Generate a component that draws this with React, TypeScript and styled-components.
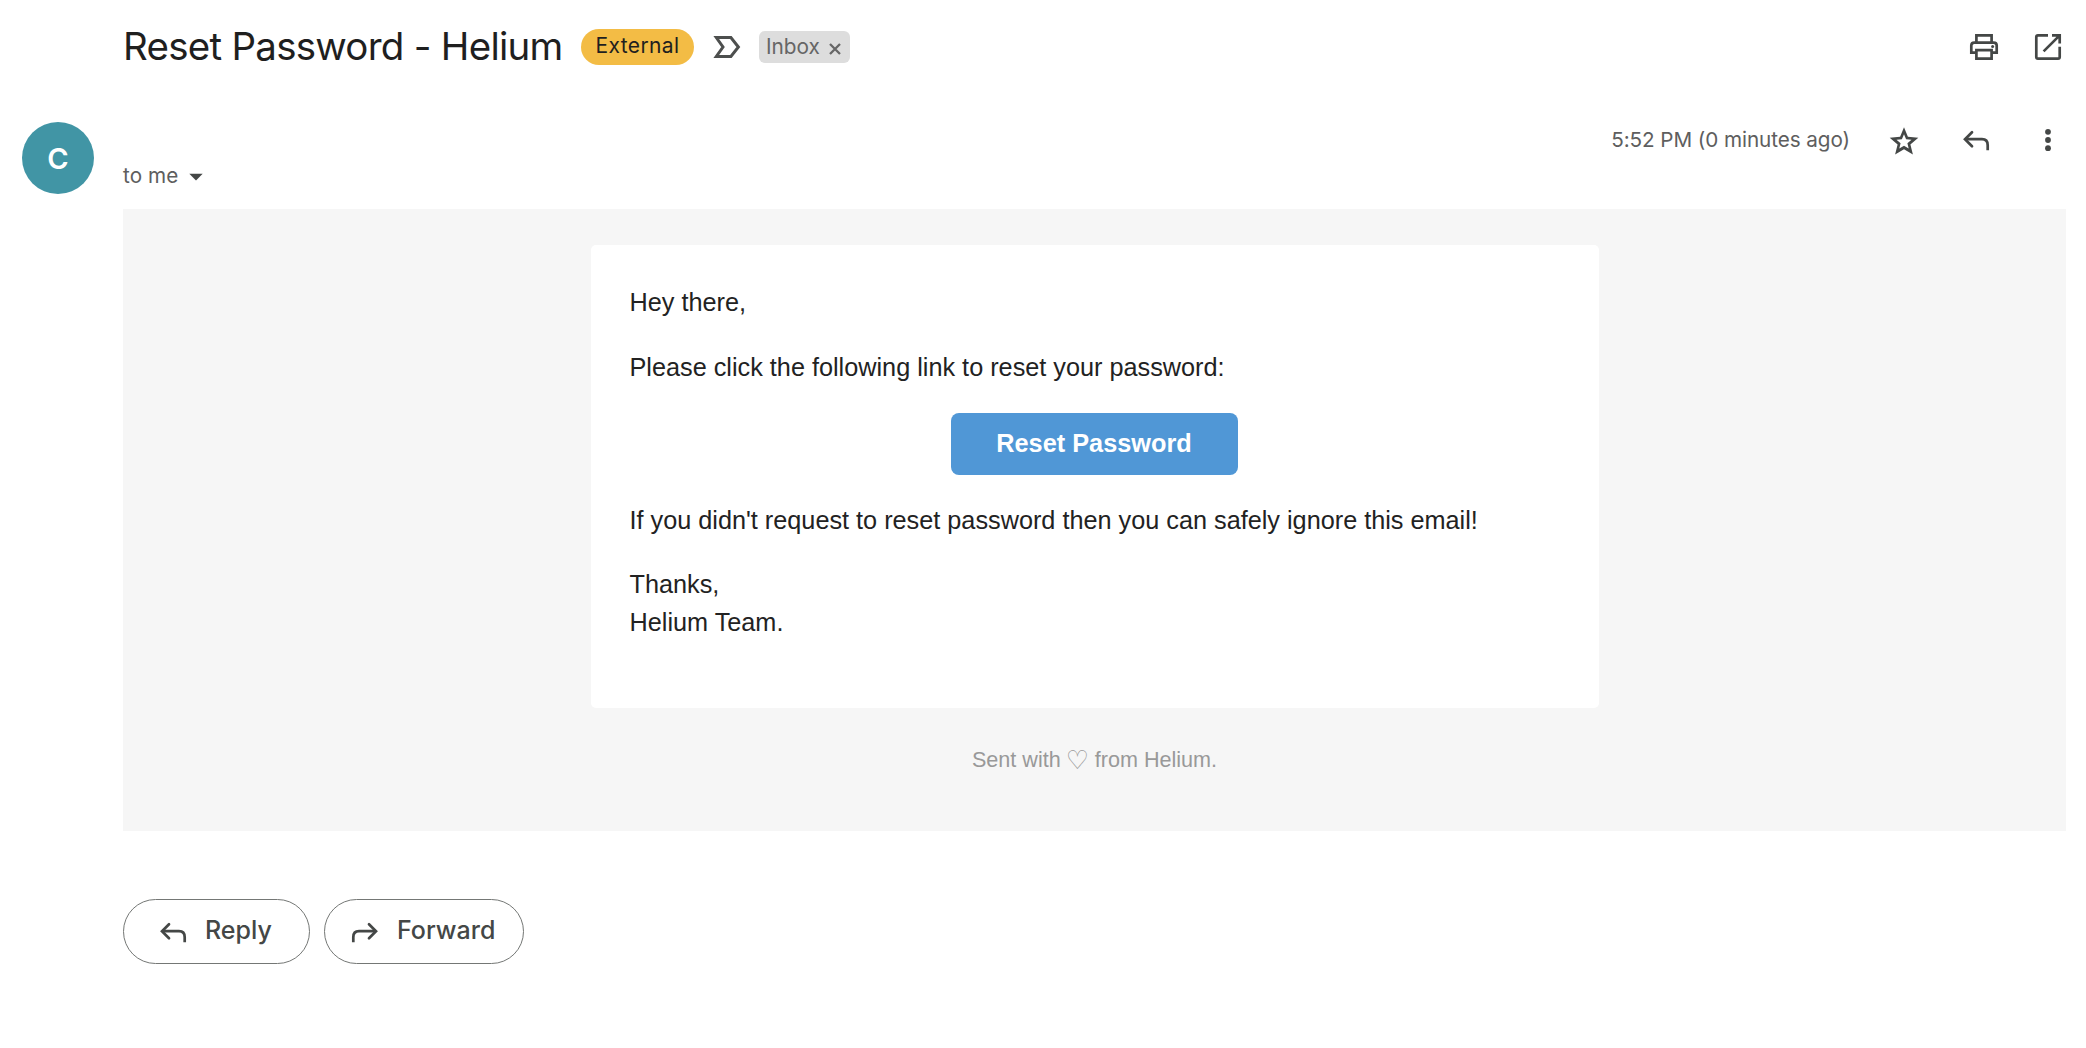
import React from "react";
import styled, { createGlobalStyle } from "styled-components";

const GlobalStyle = createGlobalStyle`
  * { box-sizing: border-box; }
  body { margin: 0; background: #fff; }
`;

const ui = `"Inter", "Roboto", sans-serif`;
const mail = `"Liberation Sans", Arial, sans-serif`;

const Page = styled.main`
  padding: 20px 20px 0 0;
  font-family: ${ui};
  color: #1f1f1f;
`;

const Header = styled.header`
  display: flex;
  align-items: center;
  height: 54px;
  padding-left: 123px;
`;

const Title = styled.h1`
  width: 440px;
  margin: 0 18px 0 0;
  font-size: 38.5px;
  font-weight: 400;
  line-height: 52px;
  letter-spacing: -0.74px;
  padding-bottom: 2px;
  white-space: nowrap;
`;

const ExternalTag = styled.span`
  width: 113px;
  height: 36px;
  border-radius: 18px;
  background: #f3bc45;
  font-size: 21px;
  line-height: 33px;
  letter-spacing: 0.36px;
  text-align: center;
`;

const ImportantMarker = styled.svg`
  width: 28px;
  height: 24px;
  margin: 0 18px 0 19px;
`;

const LabelChip = styled.span`
  display: flex;
  align-items: center;
  justify-content: space-between;
  width: 91px;
  height: 32px;
  padding: 0 9px 0 7px;
  border-radius: 6px;
  background: #ddd;
  color: #666;
  font-size: 20.8px;
  line-height: 30px;
`;

const CloseGlyph = styled.svg`
  width: 12px;
  height: 12px;
  margin-top: 3px;
`;

const Actions = styled.div<{ $gap: number }>`
  display: flex;
  align-items: center;
  gap: ${(p) => p.$gap}px;
  margin-left: auto;
`;

const Icon = styled.svg<{ $flip?: boolean }>`
  flex: none;
  width: 36px;
  height: 36px;
  fill: none;
  stroke: #444746;
  stroke-width: 2.7;
  transform: ${(p) => (p.$flip ? "scaleX(-1)" : "none")};
`;

const Message = styled.article`
  display: grid;
  grid-template-columns: 101px 1fr;
  margin-top: 48px;
  padding-left: 22px;
`;

const Avatar = styled.div`
  width: 72px;
  height: 72px;
  border-radius: 50%;
  background: #4195a5;
  color: #fff;
  font-size: 29px;
  font-weight: 600;
  line-height: 73px;
  text-align: center;
`;

const MetaRow = styled.div`
  display: flex;
  align-items: center;
  height: 36px;
  color: #5e5e5e;
  font-size: 20.7px;
`;

const Recipient = styled.span`
  padding-bottom: 2px;
  letter-spacing: 0.1px;
`;

const Timestamp = styled.span`
  line-height: 34px;
  padding-bottom: 1px;
  letter-spacing: -0.08px;
`;

const Caret = styled.svg`
  width: 14px;
  height: 8px;
  margin: 1px 0 0 11px;
`;

const Body = styled.section`
  display: flex;
  flex-direction: column;
  align-items: center;
  height: 622px;
  margin-top: 15px;
  padding-top: 36px;
  background: #f6f6f6;
  font-family: ${mail};
`;

const Card = styled.div`
  width: 1008px;
  height: 463px;
  padding: 39px 38px 0 39px;
  border-radius: 5px;
  background: #fff;
  color: #222;
  font-size: 25.25px;
  line-height: 37.3px;
`;

const Paragraph = styled.p`
  margin: 0 0 27.5px;
`;

const ResetButton = styled.button`
  display: block;
  width: 287px;
  height: 62px;
  margin: -1px 0 27px 321px;
  padding: 0;
  border: 0;
  border-radius: 8px;
  background: #5097d6;
  color: #fff;
  font: 700 25.3px ${mail};
`;

const Footer = styled.p`
  display: flex;
  align-items: center;
  gap: 7px;
  margin: 37px 0 0;
  color: #999;
  font-size: 21.6px;
  line-height: 30px;
`;

const Heart = styled.span`
  width: 20px;
  font-family: "DejaVu Sans", sans-serif;
  font-size: 26px;
  line-height: 24px;
  text-indent: -2px;
`;

const Replies = styled.footer`
  display: flex;
  gap: 14px;
  margin-top: 68px;
`;

const ReplyButton = styled.button<{ $width: number; $inset: number }>`
  display: flex;
  align-items: center;
  gap: 14px;
  width: ${(p) => p.$width}px;
  height: 65px;
  padding: 0 0 0 ${(p) => p.$inset}px;
  border: 1px solid #747775;
  border-radius: 33px;
  background: #fff;
  color: #444746;
  font: 450 25px ${ui};
`;

const ButtonText = styled.span`
  padding-bottom: 3px;
`;

const ReplyArrow = ({ flip }: { flip?: boolean }) => (
  <Icon $flip={flip} viewBox="0 0 36 36">
    <path d="M14 10.2 7 17.2l7 7" strokeLinecap="round" />
    <path d="M7.5 17.2H24q5.7 0 5.7 6v5" />
  </Icon>
);

export default function App() {
  return (
    <>
      <GlobalStyle />
      <Page>
        <Header>
          <Title>Reset Password - Helium</Title>
          <ExternalTag>External</ExternalTag>
          <ImportantMarker viewBox="0 0 28 24">
            <path d="M3.3 2.5h14.6L25.4 12l-7.5 9.5H3.3L10 12z" fill="none" stroke="#4d4f4e" strokeWidth="3" />
          </ImportantMarker>
          <LabelChip>
            Inbox
            <CloseGlyph viewBox="0 0 12 12">
              <path d="M1 1l10 10M11 1 1 11" stroke="#666" strokeWidth="2.3" />
            </CloseGlyph>
          </LabelChip>
          <Actions $gap={28}>
            <Icon viewBox="0 0 36 36">
              <path d="M10.4 14V6.4h15.2V14M10.4 23.6H5.3v-7q0-3 3-3h19.4q3 0 3 3v7h-5.1M10.4 21.2h15.2v8.5H10.4z" />
              <circle cx="26.6" cy="17.6" r="1.5" fill="#444746" stroke="none" />
            </Icon>
            <Icon viewBox="0 0 36 36">
              <path d="M18 6.3H8q-1.7 0-1.7 1.7v20q0 1.7 1.7 1.7h20q1.7 0 1.7-1.7V17.8M22 6.3h7.7v8.2M29.4 6.6 13.6 22.4" />
            </Icon>
          </Actions>
        </Header>
        <Message>
          <Avatar>C</Avatar>
          <div>
            <MetaRow>
              <Actions $gap={36}>
                <Timestamp>5:52 PM (0 minutes ago)</Timestamp>
                <Icon viewBox="0 0 36 36">
                  <path
                    fill="#444746"
                    stroke="none"
                    fillRule="evenodd"
                    d="M18 5.2l3.9 9.6 10.4.9-7.9 6.7 2.5 10.1-8.9-5.3-8.9 5.3 2.5-10.1-7.9-6.7 10.4-.9zM18 12.3l-2.1 5-5.4.5 4.1 3.5-1.3 5.3 4.7-2.9 4.7 2.9-1.3-5.3 4.1-3.5-5.4-.5z"
                  />
                </Icon>
                <ReplyArrow />
                <Icon viewBox="0 0 36 36">
                  <g fill="#444746" stroke="none">
                    <circle cx="18" cy="9.8" r="2.9" />
                    <circle cx="18" cy="18" r="2.9" />
                    <circle cx="18" cy="26.2" r="2.9" />
                  </g>
                </Icon>
              </Actions>
            </MetaRow>
            <MetaRow>
              <Recipient>to me</Recipient>
              <Caret viewBox="0 0 14 8">
                <path d="M.3.7h13.4L7 7.6z" fill="#444746" />
              </Caret>
            </MetaRow>
            <Body>
              <Card>
                <Paragraph>Hey there,</Paragraph>
                <Paragraph>Please click the following link to reset your password:</Paragraph>
                <ResetButton>Reset Password</ResetButton>
                <Paragraph>If you didn't request to reset password then you can safely ignore this email!</Paragraph>
                <Paragraph>
                  Thanks,
                  <br />
                  Helium Team.
                </Paragraph>
              </Card>
              <Footer>
                Sent with <Heart>♡</Heart> from Helium.
              </Footer>
            </Body>
            <Replies>
              <ReplyButton $width={187} $inset={31}>
                <ReplyArrow />
                <ButtonText>Reply</ButtonText>
              </ReplyButton>
              <ReplyButton $width={200} $inset={22}>
                <ReplyArrow flip />
                <ButtonText>Forward</ButtonText>
              </ReplyButton>
            </Replies>
          </div>
        </Message>
      </Page>
    </>
  );
}
